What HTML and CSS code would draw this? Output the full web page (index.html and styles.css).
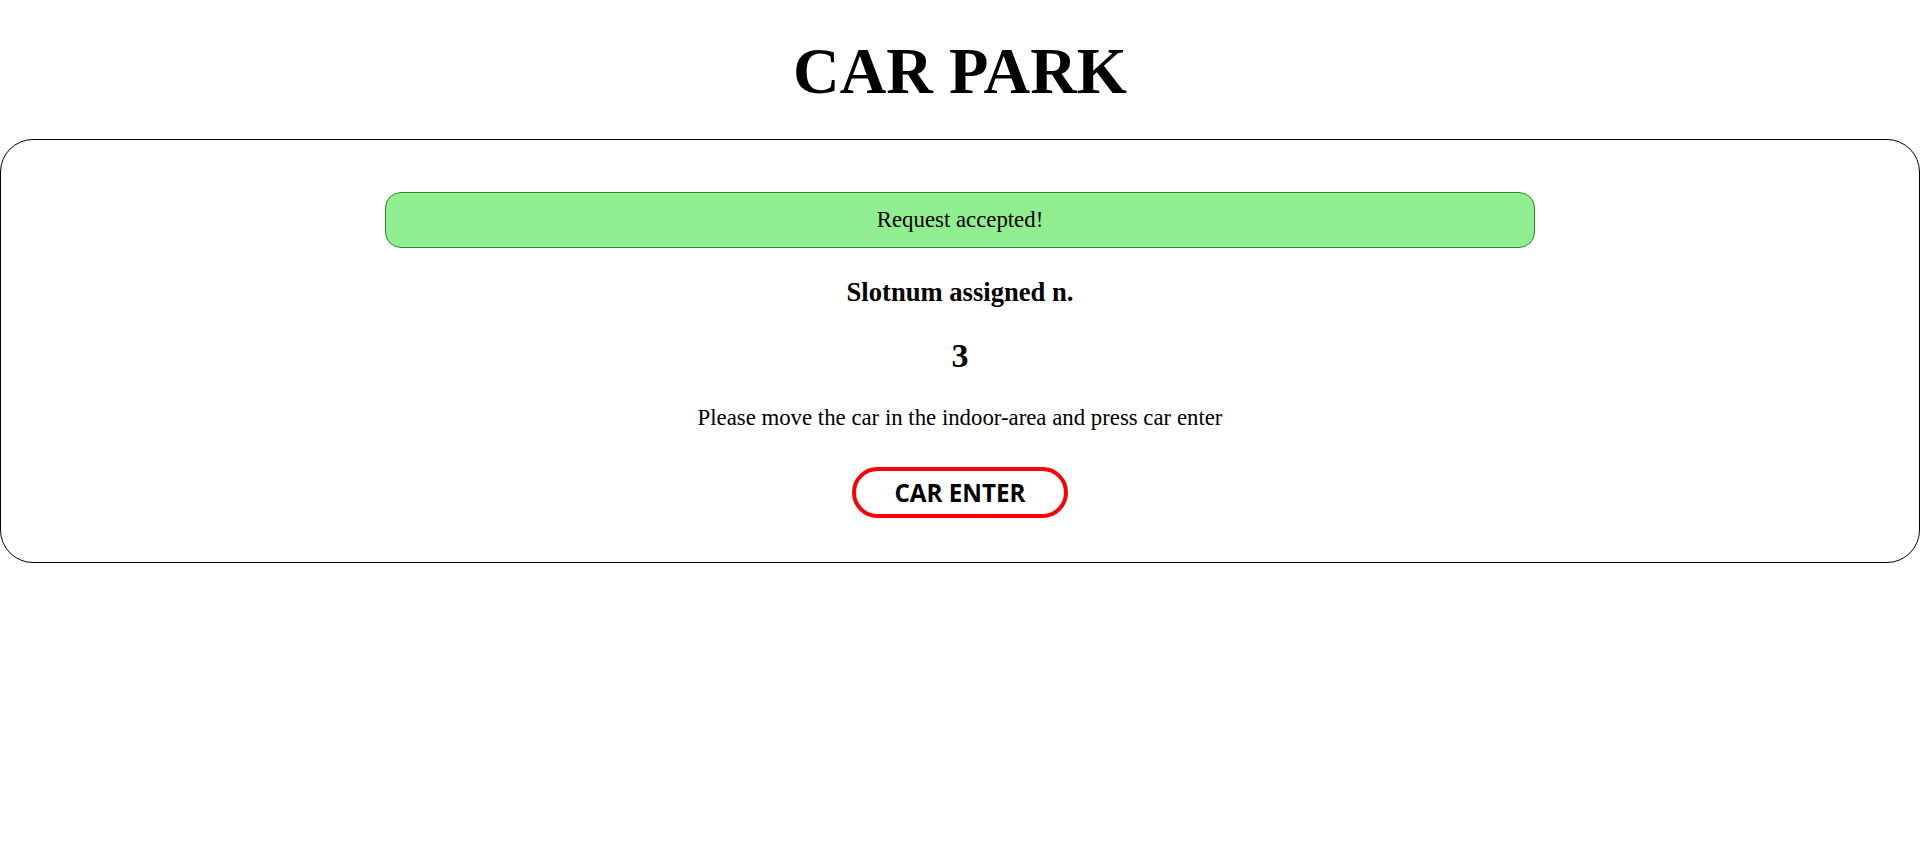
FILE: index.html
```html
<!DOCTYPE html>
<html lang="en">
<head>
<meta charset="utf-8">
<title>Car Park</title>
<link rel="stylesheet" href="styles.css">
</head>
<body>
  <h1 class="title">CAR PARK</h1>
  <main class="card">
    <div class="alert">Request accepted!</div>
    <h2 class="slot-label">Slotnum assigned n.</h2>
    <h2 class="slot-num">3</h2>
    <p class="hint">Please move the car in the indoor-area and press car enter</p>
    <button class="enter-btn" type="button">CAR ENTER</button>
  </main>
</body>
</html>
```

FILE: styles.css
```css
html, body {
  margin: 0;
  padding: 0;
  background: #ffffff;
}

body {
  font-family: "Liberation Serif", "Times New Roman", serif;
  color: #000;
}

.title {
  margin: 36px 0 32px;
  font-size: 64.5px;
  font-weight: bold;
  line-height: 71px;
  text-align: center;
}

.card {
  display: flex;
  flex-direction: column;
  align-items: center;
  border: 1px solid #000;
  border-radius: 33px;
  padding: 52px 0 44px;
}

.alert {
  box-sizing: border-box;
  width: 1150px;
  height: 56px;
  display: flex;
  align-items: center;
  justify-content: center;
  background: #90ee90;
  border: 1px solid #1f8f1f;
  border-radius: 16px;
  font-size: 22.8px;
  line-height: 26px;
}

.slot-label {
  margin: 29px 0 0;
  font-size: 26.6px;
  font-weight: bold;
  line-height: 30px;
}

.slot-num {
  margin: 30px 0 0;
  font-size: 34px;
  font-weight: bold;
  line-height: 38px;
}

.hint {
  margin: 30px 0 0;
  font-size: 22.8px;
  line-height: 26px;
}

.enter-btn {
  box-sizing: border-box;
  margin-top: 36px;
  height: 51px;
  padding: 0 38px;
  background: #fff;
  border: 4px solid #ff0000;
  border-radius: 26px;
  font-family: "Open Sans", "Noto Sans", sans-serif;
  font-weight: bold;
  font-size: 24.2px;
  line-height: 33px;
  color: #000;
  cursor: pointer;
}
```
